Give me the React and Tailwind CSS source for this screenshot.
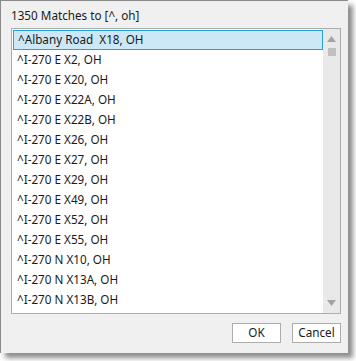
import React from 'react';

const MATCHES = [
  '^Albany Road  X18, OH',
  '^I-270 E X2, OH',
  '^I-270 E X20, OH',
  '^I-270 E X22A, OH',
  '^I-270 E X22B, OH',
  '^I-270 E X26, OH',
  '^I-270 E X27, OH',
  '^I-270 E X29, OH',
  '^I-270 E X49, OH',
  '^I-270 E X52, OH',
  '^I-270 E X55, OH',
  '^I-270 N X10, OH',
  '^I-270 N X13A, OH',
  '^I-270 N X13B, OH',
];

const App = () => {
  return (
    <div
      className="w-[356px] h-[361px] bg-white overflow-hidden"
      style={{ fontFamily: '"Noto Sans", "Open Sans", sans-serif' }}
    >
      <div className="w-[348px] h-[353px] bg-[#f0f0f0] border-l border-t border-[#8a8a8a] shadow-[5px_5px_5px_rgba(0,0,0,0.45)] flex flex-col pl-[10px] pr-[7px]">
        <div className="h-[27px] flex items-center text-[11.7px] text-[#1a1a1a] pt-[2px]">
          1350 Matches to [^, oh]
        </div>

        {/* results list */}
        <div className="h-[286px] bg-white border border-[#adadad] flex">
          <div className="flex-1 pt-[1px] pl-[1px]">
            {MATCHES.map((m, i) => (
              <div
                key={m}
                className={`h-[20px] flex items-center pl-[4px] text-[11.7px] text-[#1a1a1a] whitespace-pre ${
                  i === 0 ? 'bg-[#cce8f6] border border-[#26a0da] pl-[3px]' : ''
                }`}
              >
                {m}
              </div>
            ))}
          </div>
          <div className="w-[17px] bg-[#e9e9e9] flex flex-col items-center">
            <svg width="9" height="6" viewBox="0 0 9 6" className="mt-[7px]">
              <path d="M4.5 0 L9 6 L0 6 Z" fill="#a3a3a3" />
            </svg>
            <div className="w-[8px] h-[8px] bg-[#c0c0c0] mt-[6px]" />
            <div className="flex-1" />
            <svg width="9" height="6" viewBox="0 0 9 6" className="mb-[7px]">
              <path d="M0 0 L9 0 L4.5 6 Z" fill="#a3a3a3" />
            </svg>
          </div>
        </div>

        <div className="flex justify-end gap-[11px] mt-[9px]">
          <button className="w-[49px] h-[20px] bg-white border border-[#adadad] text-[11.7px] text-[#1a1a1a] leading-none">
            OK
          </button>
          <button className="w-[49px] h-[20px] bg-white border border-[#adadad] text-[11.7px] text-[#1a1a1a] leading-none">
            Cancel
          </button>
        </div>
      </div>
    </div>
  );
};

export default App;
